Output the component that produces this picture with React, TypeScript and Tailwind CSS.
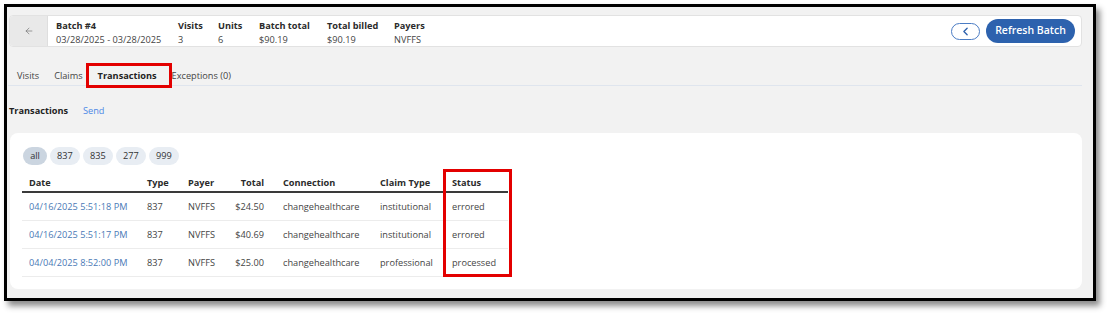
import { ArrowLeft, ChevronLeft } from "lucide-react";

const rows = [
    { date: "04/16/2025 5:51:18 PM", type: "837", payer: "NVFFS", total: "$24.50", conn: "changehealthcare", claim: "institutional", status: "errored" },
    { date: "04/16/2025 5:51:17 PM", type: "837", payer: "NVFFS", total: "$40.69", conn: "changehealthcare", claim: "institutional", status: "errored" },
    { date: "04/04/2025 8:52:00 PM", type: "837", payer: "NVFFS", total: "$25.00", conn: "changehealthcare", claim: "professional", status: "processed" },
];

const stats = [
    { label: "Batch #4", value: "03/28/2025 - 03/28/2025", w: "w-[122px]" },
    { label: "Visits", value: "3", w: "w-[40px]" },
    { label: "Units", value: "6", w: "w-[41px]" },
    { label: "Batch total", value: "$90.19", w: "w-[68px]" },
    { label: "Total billed", value: "$90.19", w: "w-[67px]" },
    { label: "Payers", value: "NVFFS", w: "w-[60px]" },
];

const cols = "grid grid-cols-[118px_41px_44px_51px_97px_72px_63px]";

export default function App() {
    return (
        <div className="w-[1107px] h-[313px] bg-white pt-[4px] pl-[4px] font-['Open_Sans',sans-serif] text-[9.2px] text-[#333]">
            <div className="w-[1092px] h-[297px] border-[3px] border-black bg-[#f2f2f2] shadow-[4px_5px_6px_rgba(0,0,0,0.45)] pl-[2px] pr-[11px] pt-[8px]">
                {/* batch header */}
                <div className="flex h-[32px] rounded-[4px] border border-[#e2e2e2] bg-white overflow-hidden">
                    <div className="w-[38px] bg-[#e9e9e9] border-r border-[#dedede] flex items-center justify-center text-[#666]">
                        <ArrowLeft className="w-[10px] h-[10px]" strokeWidth={1.5} />
                    </div>
                    <div className="flex pl-[8px] pt-[3px] leading-[14px]">
                        {stats.map((s) => (
                            <div key={s.label} className={s.w}>
                                <div className="font-bold text-[#2b2b2b]">{s.label}</div>
                                <div className="text-[#444]">{s.value}</div>
                            </div>
                        ))}
                    </div>
                    <div className="ml-auto flex items-center gap-[6px] pr-[6px]">
                        <button className="w-[29px] h-[17px] rounded-full border border-[#4b7cc4] bg-white flex items-center justify-center text-[#2f62ad]">
                            <ChevronLeft className="w-[13px] h-[13px]" strokeWidth={2.5} />
                        </button>
                        <button className="w-[89px] h-[24px] rounded-full bg-[#2d62ae] text-white text-[10.5px] font-semibold">Refresh Batch</button>
                    </div>
                </div>

                {/* tabs */}
                <div className="mt-[17px] ml-[-1px] h-[22px] border-b border-[#dfe5ee] flex items-center gap-[15px] pl-[9px] pt-[2px] text-[#444]">
                    <span>Visits</span>
                    <span>Claims</span>
                    <span className="relative inline-block leading-[13px] font-bold text-[#222]">
                        Transactions
                        <span className="absolute left-[-12px] right-[-15px] top-[-6px] bottom-[-6px] border-[3px] border-[#e30000]" />
                    </span>
                    <span>Exceptions (0)</span>
                </div>

                <div className="mt-[18px] flex gap-[15px] leading-[13px]">
                    <span className="font-bold text-[#222]">Transactions</span>
                    <span className="text-[#4b88e6]">Send</span>
                </div>

                {/* transactions card */}
                <div className="mt-[16px] ml-[1px] h-[156px] rounded-[8px] bg-white pl-[12px] pt-[14px]">
                    <div className="flex gap-[3px] ml-[1px]">
                        {["all", "837", "835", "277", "999"].map((p, i) => (
                            <span key={p} className={`h-[18px] rounded-full flex items-center justify-center ${p === "all" ? "w-[24px]" : "w-[30px]"} ${i === 0 ? "bg-[#cbd5e0]" : "bg-[#e8edf3]"}`}>{p}</span>
                        ))}
                    </div>

                    <div className="relative mt-[9px] w-[486px]">
                        <div className={`${cols} h-[19px] items-center border-b-2 border-[#3a3a3a] font-bold text-[#2b2b2b]`}>
                            <span className="pl-[7px]">Date</span>
                            <span className="pl-[7px]">Type</span>
                            <span className="pl-[7px]">Payer</span>
                            <span className="pr-[12px] text-right">Total</span>
                            <span className="pl-[7px]">Connection</span>
                            <span className="pl-[7px]">Claim Type</span>
                            <span className="pl-[7px]">Status</span>
                        </div>
                        {rows.map((r, i) => (
                            <div key={i} className={`${cols} h-[28px] items-center border-b border-[#ececec] text-[#444]`}>
                                <span className="pl-[7px] text-[#4a79b6]">{r.date}</span>
                                <span className="pl-[7px]">{r.type}</span>
                                <span className="pl-[7px]">{r.payer}</span>
                                <span className="pr-[12px] text-right">{r.total}</span>
                                <span className="pl-[7px]">{r.conn}</span>
                                <span className="pl-[7px]">{r.claim}</span>
                                <span className="pl-[7px]">{r.status}</span>
                            </div>
                        ))}
                        <div className="absolute left-[421px] top-[-5px] w-[69px] h-[108px] border-[3px] border-[#e30000]" />
                    </div>
                </div>
            </div>
        </div>
    );
}
